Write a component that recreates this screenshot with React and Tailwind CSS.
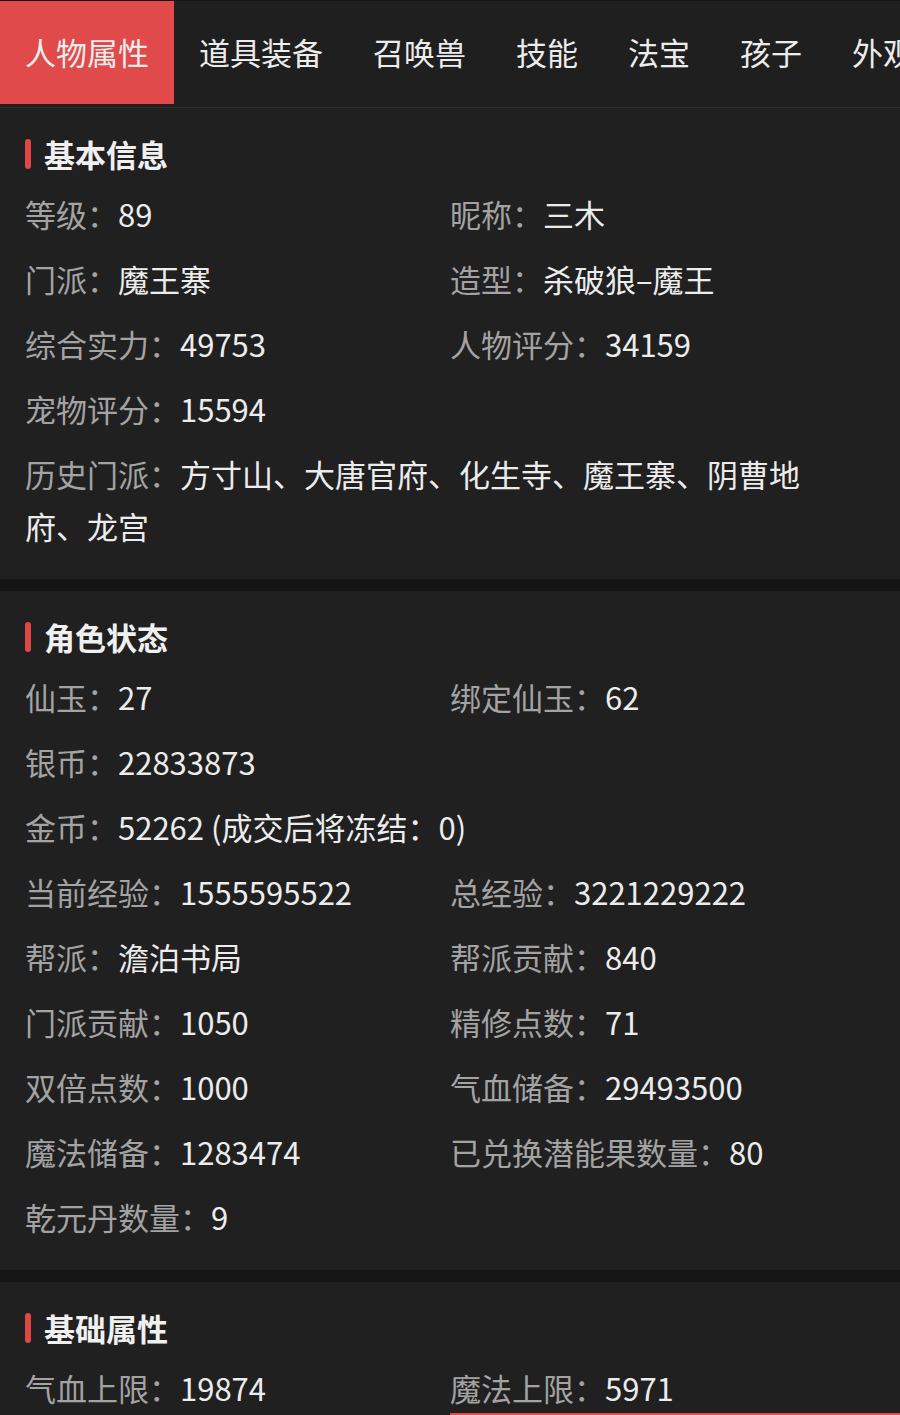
import React from 'react';

const tabs = ['人物属性', '道具装备', '召唤兽', '技能', '法宝', '孩子', '外观'];

const sections = [
    {
        title: '基本信息',
        rows: [
            { label: '等级', value: '89' },
            { label: '昵称', value: '三木' },
            { label: '门派', value: '魔王寨' },
            { label: '造型', value: '杀破狼–魔王' },
            { label: '综合实力', value: '49753' },
            { label: '人物评分', value: '34159' },
            { label: '宠物评分', value: '15594', full: true },
            { label: '历史门派', value: '方寸山、大唐官府、化生寺、魔王寨、阴曹地府、龙宫', full: true, wrap: true },
        ],
    },
    {
        title: '角色状态',
        rows: [
            { label: '仙玉', value: '27' },
            { label: '绑定仙玉', value: '62' },
            { label: '银币', value: '22833873', full: true },
            { label: '金币', value: '52262 (成交后将冻结：0)', full: true },
            { label: '当前经验', value: '1555595522' },
            { label: '总经验', value: '3221229222' },
            { label: '帮派', value: '澹泊书局' },
            { label: '帮派贡献', value: '840' },
            { label: '门派贡献', value: '1050' },
            { label: '精修点数', value: '71' },
            { label: '双倍点数', value: '1000' },
            { label: '气血储备', value: '29493500' },
            { label: '魔法储备', value: '1283474' },
            { label: '已兑换潜能果数量', value: '80' },
            { label: '乾元丹数量', value: '9', full: true },
        ],
    },
    {
        title: '基础属性',
        rows: [
            { label: '气血上限', value: '19874' },
            { label: '魔法上限', value: '5971' },
        ],
    },
];

function Section({ title, rows }) {
    return (
        <div className="bg-[#202020] px-[25px] pt-[20px] pb-[27px]">
            {/* header */}
            <div className="flex items-center h-[52px] mb-[8px]">
                <span className="w-[6px] h-[30px] rounded-full bg-[#e04848] mr-[13px]"></span>
                <span className="text-[31px] leading-[52px] font-bold text-[#f0f0f0]">{title}</span>
            </div>
            <div className="grid grid-cols-2 gap-y-[13px]">
                {rows.map((r) => (
                    <div
                        key={r.label}
                        className={(r.full ? 'col-span-2 ' : '') + (r.wrap ? 'pr-[50px] ' : 'whitespace-nowrap ') + 'text-[31px] leading-[52px]'}
                    >
                        <span className="text-[#a3a3a3]">{r.label}：</span>
                        <span className="text-[#ececec]">{r.value}</span>
                    </div>
                ))}
            </div>
        </div>
    );
}

export default function App() {
    return (
        <div
            className="relative h-[1415px] overflow-hidden bg-[#151515]"
            style={{ fontFamily: '"Noto Sans CJK SC", "Noto Sans", sans-serif' }}
        >
            {/* Tabs */}
            <div className="h-[108px] bg-[#1f1f1f] border-t border-[#141414] border-b border-b-[#2c2c2c] flex items-start overflow-hidden whitespace-nowrap">
                {tabs.map((t, i) => (
                    <div
                        key={t}
                        className={(i === 0 ? 'bg-[#e04a4a] ' : '') + 'h-[103px] px-[25px] flex items-center text-[31px] text-[#ececec] shrink-0'}
                    >
                        {t}
                    </div>
                ))}
            </div>

            <div className="flex flex-col gap-[12px]">
                {sections.map((s) => (
                    <Section key={s.title} title={s.title} rows={s.rows} />
                ))}
            </div>

            {/* floating bar peeking at the bottom */}
            <div className="absolute left-[450px] right-0 top-[1413px] h-[40px] bg-[#e04a4a]"></div>
        </div>
    );
}
